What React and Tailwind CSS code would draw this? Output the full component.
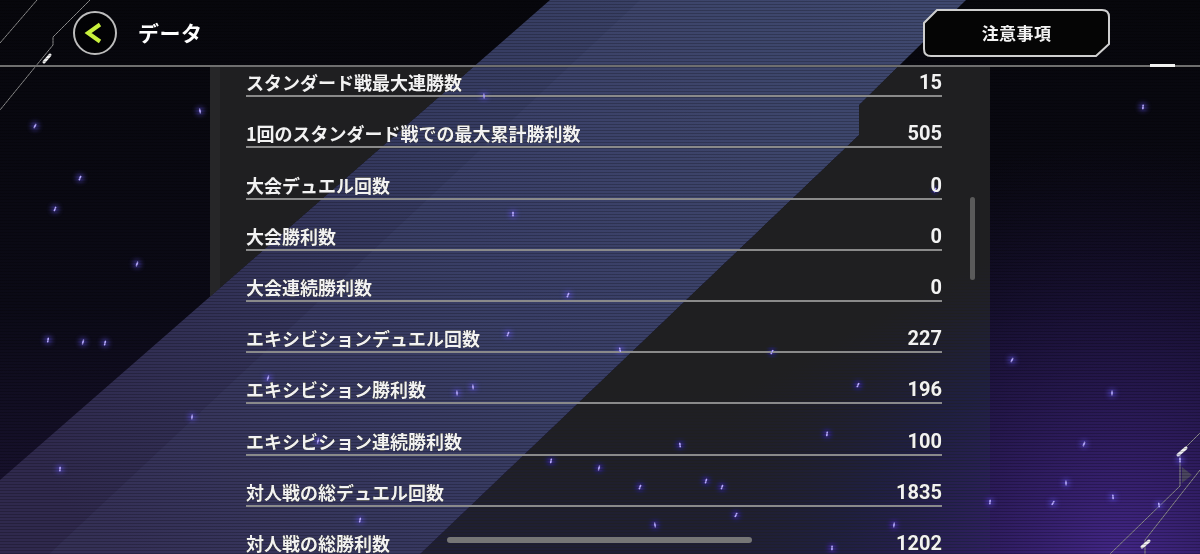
import React from 'react';

const rows = [
  ['スタンダード戦最大連勝数', '15'],
  ['1回のスタンダード戦での最大累計勝利数', '505'],
  ['大会デュエル回数', '0'],
  ['大会勝利数', '0'],
  ['大会連続勝利数', '0'],
  ['エキシビションデュエル回数', '227'],
  ['エキシビション勝利数', '196'],
  ['エキシビション連続勝利数', '100'],
  ['対人戦の総デュエル回数', '1835'],
  ['対人戦の総勝利数', '1202'],
];

const stars = [
  [200, 111], [35, 126], [80, 178], [55, 209], [137, 264], [83, 342], [105, 343], [48, 340],
  [192, 417], [60, 469], [513, 214], [457, 393], [473, 387], [620, 350], [772, 352], [858, 385],
  [640, 487], [722, 487], [706, 481], [599, 468], [551, 461], [827, 434], [1143, 107], [1112, 393],
  [1066, 483], [1113, 497], [1159, 505], [1053, 503], [1012, 360], [1084, 444], [935, 190],
  [268, 378], [318, 441], [360, 520], [894, 525], [990, 502], [832, 548], [1180, 460],
  [484, 96], [680, 445], [655, 525], [736, 515], [568, 295], [508, 334],
];

function Background() {
  return (
    <svg className="absolute inset-0" width="1200" height="554" viewBox="0 0 1200 554">
      <defs>
        <linearGradient id="base" x1="0" y1="0" x2="0" y2="1">
          <stop offset="0" stopColor="#07070c" />
          <stop offset="0.55" stopColor="#0b0a16" />
          <stop offset="1" stopColor="#1c1436" />
        </linearGradient>
        <radialGradient id="glow" cx="1120" cy="560" r="420" gradientUnits="userSpaceOnUse">
          <stop offset="0" stopColor="#4a2a96" stopOpacity="0.85" />
          <stop offset="0.6" stopColor="#2c1a60" stopOpacity="0.4" />
          <stop offset="1" stopColor="#1a1038" stopOpacity="0" />
        </radialGradient>
        <linearGradient id="band" x1="900" y1="0" x2="100" y2="554" gradientUnits="userSpaceOnUse">
          <stop offset="0" stopColor="#3c4569" />
          <stop offset="0.5" stopColor="#353a60" />
          <stop offset="1" stopColor="#2f294d" />
        </linearGradient>
        <filter id="blur" x="-2" y="-2" width="5" height="5">
          <feGaussianBlur stdDeviation="2.5" />
        </filter>
      </defs>
      <rect width="1200" height="554" fill="url(#base)" />
      <rect width="1200" height="554" fill="url(#glow)" />
      <polygon points="550,0 966,0 859,105 859,135 420,554 0,554 0,480" fill="url(#band)" />
      <polygon points="640,0 966,0 859,105 859,135 420,554 0,554 0,600" fill="#5a6390" opacity="0.12" />
      <g stroke="#8a8a8a" strokeWidth="1" fill="none">
        <line x1="0" y1="43" x2="37" y2="0" />
        <polyline points="90,0 53,37 53,45 0,110" />
        <polyline points="1200,433 1180,453 1180,486 1110,554" />
        <polyline points="1200,470 1145,540 1145,554" />
      </g>
      <g stroke="#f0f0f0" strokeWidth="3" strokeLinecap="round">
        <line x1="44" y1="62" x2="50" y2="55" />
        <line x1="1178" y1="455" x2="1186" y2="448" />
        <line x1="1142" y1="547" x2="1149" y2="541" />
      </g>
      <polygon points="1182,467 1192,475 1182,483" fill="#4a4560" />
      {stars.map(([x, y], i) => (
        <g key={i}>
          <circle cx={x} cy={y} r="4" fill="#5b4fe0" opacity="0.6" filter="url(#blur)" />
          <rect x={x - 0.8} y={y - 2.5} width="1.6" height="5" rx="0.8" fill="#b7aaff" transform={`rotate(${(i * 37) % 40 - 10} ${x} ${y})`} />
        </g>
      ))}
    </svg>
  );
}

export default function App() {
  return (
    <div className="relative w-[1200px] h-[554px] overflow-hidden bg-black text-white font-['Noto_Sans_CJK_JP','Noto_Sans',sans-serif]">
      <Background />
      <div className="absolute inset-0 pointer-events-none bg-[repeating-linear-gradient(0deg,rgba(0,0,0,0.22)_0px,rgba(0,0,0,0.22)_1px,transparent_1px,transparent_3px)]" />

      <div className="relative flex flex-col h-full">
        <div className="h-[65px] flex items-center pl-[73px] pr-[90px]">
          <button className="w-[44px] h-[44px] rounded-full border-2 border-[#bdbdbd] bg-black/60 flex items-center justify-center">
            <svg width="40" height="40" viewBox="0 0 40 40">
              <path d="M25 11.5 L13 20 L25 28.5" stroke="#c8f03c" strokeWidth="4" fill="none" strokeLinejoin="miter" />
            </svg>
          </button>
          <h1 className="ml-[21px] text-[21px] font-bold leading-none tracking-wide">データ</h1>
          <div className="flex-1" />
          <button className="relative w-[187px] h-[48px] flex items-center justify-center">
            <svg className="absolute inset-0" width="187" height="48" viewBox="0 0 187 48">
              <path d="M14 1 H179 Q186 1 186 8 V35 L173 47 H8 Q1 47 1 40 V14 Z" fill="#050505" stroke="#cfcfcf" strokeWidth="2" />
            </svg>
            <span className="relative text-[17px] font-bold tracking-wide text-[#f2f2f2]">注意事項</span>
          </button>
        </div>
        <div className="relative h-[2px] bg-[#6f6f6f]">
          <div className="absolute left-[1150px] -top-px w-[25px] h-[3px] bg-[#f2f2f2]" />
        </div>

        <div className="flex flex-1 min-h-0">
          <div className="w-[210px]" />
          <div className="relative w-[780px] bg-[#1f1f21] mix-blend-lighten border-l-[10px] border-[#262628] overflow-hidden">
            <div className="-mt-[21px] pl-[26px] pr-[48px]">
              {rows.map(([label, value]) => (
                <div key={label} className="h-[51.2px] flex flex-col justify-end">
                  <div className="h-[22px] flex items-center justify-between">
                    <span className="text-[18px] font-bold leading-none text-[#f2f2f2]">{label}</span>
                    <span className="text-[20px] font-bold leading-none font-['Roboto',sans-serif] text-[#f2f2f2]">{value}</span>
                  </div>
                  <div className="mt-[2px] h-[2px] bg-[#8a8a8a]" />
                </div>
              ))}
            </div>
            <div className="absolute left-[750px] top-[130px] w-[5px] h-[83px] rounded-full bg-[#5a5a5a]" />
          </div>
        </div>
      </div>

      <div className="absolute left-[447px] top-[537px] w-[305px] h-[6px] rounded-full bg-[#767676]" />
    </div>
  );
}
